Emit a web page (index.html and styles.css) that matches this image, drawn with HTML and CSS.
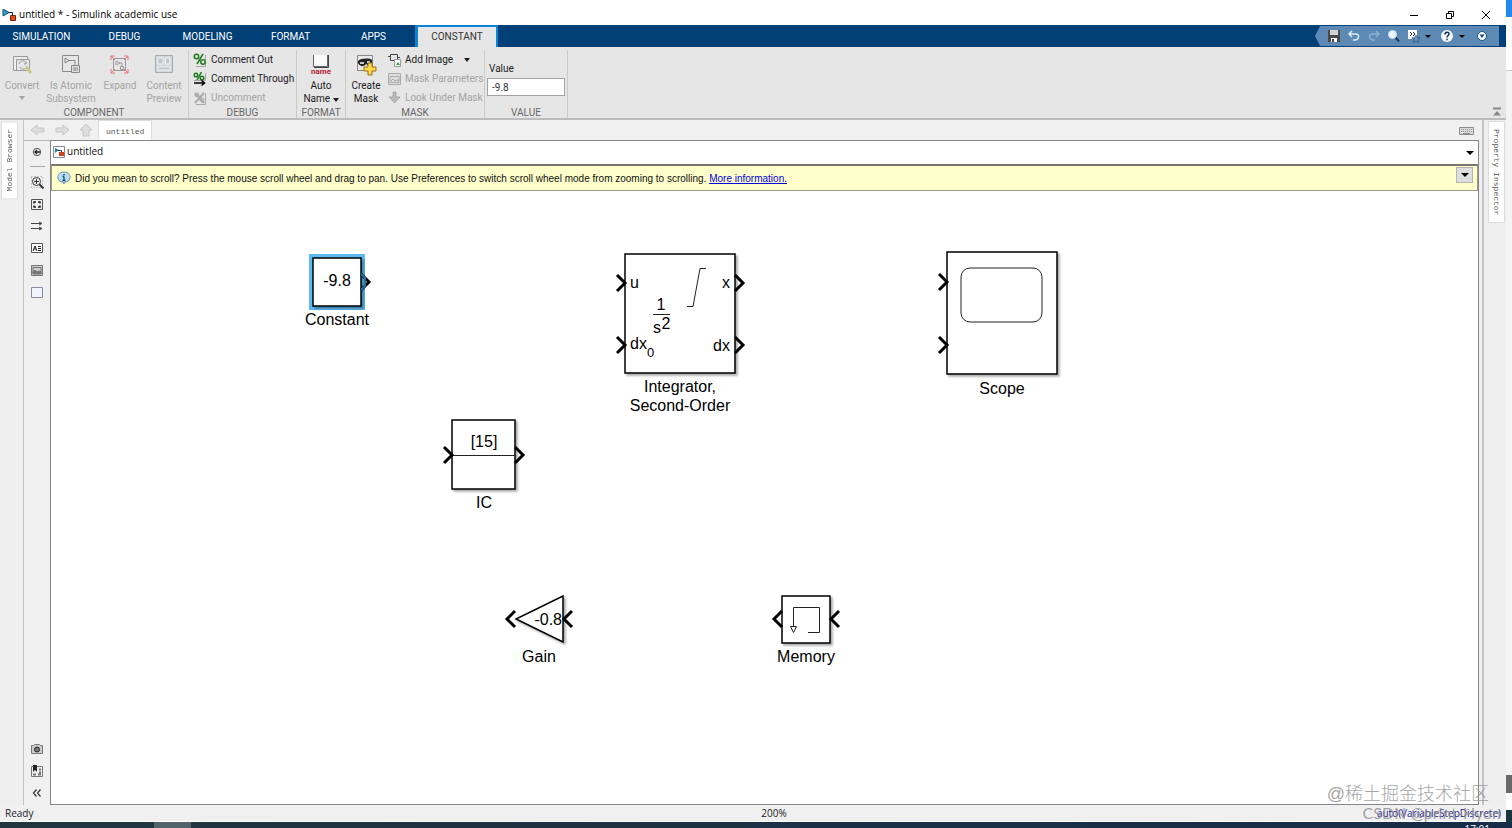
FILE: index.html
```html
<!DOCTYPE html>
<html lang="en">
<head>
<meta charset="utf-8">
<title>untitled * - Simulink academic use</title>
<link rel="stylesheet" href="styles.css">
</head>
<body>
<div class="desktop">
<div class="screen">
<div class="window">
  <header class="titlebar">
    <svg width="14" height="12" viewBox="0 0 14 12"><path d="M1 0v7l6-3.500z" fill="#29a3cf" stroke="#14506e"/><path d="M6 3.500h4.500v4" fill="none" stroke="#222"/><path d="M8.500 6.500h5v5h-5z" fill="#e0501c" stroke="#7c2408"/></svg>
    <h1 class="title">untitled * - Simulink academic use</h1>
    <div class="winbtns">
      <button aria-label="Minimize"><svg width="10" height="10"><path d="M1 5.500h8" stroke="#000"/></svg></button>
      <button aria-label="Restore"><svg width="10" height="10" fill="none" stroke="#000"><path d="M1.500 3.500h5v5h-5zM3.500 3V1.500h5v5H7"/></svg></button>
      <button aria-label="Close"><svg width="10" height="10"><path d="M1 1l8 8M9 1l-8 8" stroke="#000"/></svg></button>
    </div>
  </header>
  <nav class="tabs">
    <button>SIMULATION</button><button>DEBUG</button><button>MODELING</button><button>FORMAT</button><button>APPS</button><button class="active">CONSTANT</button>
    <div class="quick">
      <button aria-label="Save"><svg width="14" height="14"><path d="M1 1h12v12H1z" fill="#4a4a4a"/><path d="M3 1h8v5H3z" fill="#d4d4d4"/><path d="M4 9h6v4H4z" fill="#fff"/><path d="M5 10h2v3H5z" fill="#444"/></svg></button>
      <button aria-label="Undo"><svg width="14" height="14" fill="none" stroke="#d8ecfa" stroke-width="1.500"><path d="M5 2L2 5l3 3M2 5h7c4 0 3 6-1 6H6"/></svg></button>
      <button aria-label="Redo"><svg width="14" height="14" fill="none" stroke="#8db1cf" stroke-width="1.500"><path d="M9 2l3 3-3 3M12 5H5c-4 0-3 6 1 6h2"/></svg></button>
      <button aria-label="Find"><svg width="14" height="14"><path d="M8 8l4 4.500" stroke="#173c63" stroke-width="2"/><circle cx="5.500" cy="5.500" r="4" fill="#edf6fc" stroke="#c8dff0"/></svg></button>
      <button class="wide" aria-label="Favorites"><svg width="26" height="14"><path d="M1 1h9v9H1z" fill="#fff"/><path d="M3 3l2 2-2 2M6 3l2 2-2 2" fill="none" stroke="#222"/><path d="M9 6l1.200 2.500 2.800.3-2 2 .5 2.700L9 12l-2.500 1.500.5-2.700-2-2 2.800-.3z" fill="#6794bd" stroke="#264f7a" stroke-width=".7"/><path d="M18 6h6l-3 3z"/></svg></button>
      <button class="wide" aria-label="Help"><svg width="26" height="14"><circle cx="6" cy="7" r="6" fill="#f5f9fc"/><path d="M4 5.500c0-3 4-3 4-.5C8 6.500 6 6.500 6 8.500M6 9.800v1.500" fill="none" stroke="#1d2c52" stroke-width="1.500"/><path d="M18 6h6l-3 3z"/></svg></button>
      <button aria-label="Quick access options"><svg width="14" height="14"><circle cx="7" cy="7" r="4.500" fill="#fff" stroke="#12518b"/><path d="M4.500 5.500h5L7 9z" fill="#0a4a86"/></svg></button>
    </div>
  </nav>
  <div class="ribbon">
    <section class="group component">
      <div class="tools">
        <button class="big" disabled><svg width="22" height="22" fill="none" stroke="#999"><path d="M2.500 2.500h14v14h-14z" fill="#eee"/><path d="M5.500 5.500h13v11h-13z" fill="#e6e6e6"/><path d="M8 10c1-4 6-4 7-1M15 8v2h-2M16 12c-1 4-6 4-7 1"/><path d="M15 13l5 6" stroke="#cfc68a" stroke-width="3"/></svg><span>Convert</span><i class="caret"></i></button>
        <button class="big mid" disabled><svg width="22" height="22" fill="none" stroke="#888"><path d="M2.500 1.500h16v16h-16z"/><path d="M5 4l4 2.500L5 9zM9 6.500h6V11"/><path d="M11.500 11.500h8v7h-8z" fill="#ddd"/><path d="M13 14h5M13 16h5"/></svg><span>Is Atomic<br>Subsystem</span></button>
        <button class="big" disabled><svg width="22" height="22" fill="none" stroke="#999"><path d="M4.500 4.500h12v12h-12z"/><path d="M7 7l4 2-4 2zM11 9h2v3"/><path d="M11.500 12.500h3v3h-3z"/><path d="M2 6V2h4M2 2l4 4M15 2h4v4M19 2l-4 4M2 15v4h4M2 19l4-4M15 19h4v-4M19 19l-4-4" stroke="#e8707f"/></svg><span>Expand</span></button>
        <button class="big" disabled><svg width="22" height="22" fill="none" stroke="#aaa"><path d="M2.500 1.500h17v17h-17z" fill="#d3d9de"/><path d="M5 4h5v6H5zM12.500 4h4v6h-4zM5 13h12v3H5z" fill="#bcc7d0" stroke="#f0f0f0"/></svg><span>Content<br>Preview</span></button>
      </div>
      <h2>COMPONENT</h2>
    </section>
    <section class="group debug">
      <div class="tools list">
        <button><svg width="14" height="14" fill="none"><path d="M3 13.500h9.500V2" stroke="#aaa"/><path d="M10 1L4 11" stroke="#217a1d" stroke-width="1.500"/><circle cx="3.500" cy="3.500" r="2.200" stroke="#217a1d" stroke-width="1.500"/><circle cx="10" cy="9" r="2.200" stroke="#217a1d" stroke-width="1.500"/></svg>Comment Out</button>
        <button><svg width="14" height="14" fill="none"><path d="M1 8.500h11.500V1" stroke="#aaa"/><path d="M8.500 0L4 8" stroke="#217a1d" stroke-width="1.500"/><circle cx="3" cy="3" r="1.800" stroke="#217a1d" stroke-width="1.500"/><circle cx="9" cy="6" r="1.800" stroke="#217a1d" stroke-width="1.500"/><path d="M1 11h10M8.500 8.500l3 2.500-3 2.500" stroke="#000" stroke-width="1.500"/></svg>Comment Through</button>
        <button disabled><svg width="14" height="14" fill="none" stroke="#aaa"><path d="M3 13.500h9.500V2"/><circle cx="4" cy="4" r="2"/><circle cx="9" cy="9" r="2"/><path d="M2 2l9 10M11 2L2 12" stroke-width="2"/></svg>Uncomment</button>
      </div>
      <h2>DEBUG</h2>
    </section>
    <section class="group format">
      <div class="tools">
        <button class="big"><svg width="22" height="22"><path d="M3.500 1v11.500h14V1" fill="#fafafa" stroke="#666"/><path d="M4 13.500h14.500V1" fill="none" stroke="#444"/><text x="11" y="20" class="name-tag">name</text></svg><span>Auto<br>Name <i class="caret"></i></span></button>
      </div>
      <h2>FORMAT</h2>
    </section>
    <section class="group mask">
      <div class="tools">
        <button class="big"><svg width="22" height="22"><path d="M2.500 1.500h15v15h-15z" fill="#e8e8e8" stroke="#888"/><path d="M3 7c3-3 12-3 14-1v4c-2 3-4 2-6 0-2 3-6 3-8-1z" fill="#222"/><path d="M5 8h4v2H5zM12 7h3v2h-3z" fill="#bfc8c0"/><path d="M13 9h4v4h4v4h-4v4h-4v-4H9v-4h4z" fill="#ffd84a" stroke="#997214"/></svg><span>Create<br>Mask</span></button>
        <div class="list">
          <button><svg width="14" height="14" fill="none"><path d="M2.500 1.500h7v6h-7zM0 3.500h2M10 4.500h2" stroke="#444"/><path d="M6.500 6.500h6v7h-6z" fill="#f5faff" stroke="#999"/><path d="M8 12l2-3 2 3z" fill="#38a438"/></svg>Add Image <i class="caret"></i></button>
          <button disabled><svg width="14" height="14" fill="none" stroke="#aaa"><path d="M.5 1.500h12v11H.5z" fill="#ddd"/><path d="M2 4.500h9v6H2z"/><path d="M3 9l2-2 2 2 2-1 2 1"/></svg>Mask Parameters</button>
          <button disabled><svg width="14" height="14"><path d="M5 1h3v5h4l-5.500 6L1 6h4z" fill="#bbb" stroke="#999" stroke-width=".7"/></svg>Look Under Mask</button>
        </div>
      </div>
      <h2>MASK</h2>
    </section>
    <section class="group value">
      <div class="tools field"><label for="val">Value</label><input id="val" type="text" value="-9.8"></div>
      <h2>VALUE</h2>
    </section>
    <button class="collapse" aria-label="Collapse toolstrip"><svg width="10" height="10"><path d="M1 1.500h8" stroke="#888" stroke-width="2"/><path d="M5 4l4 4.500H1z" fill="#888"/></svg></button>
  </div>
  <main class="work">
    <aside class="dock left"><button>Model Browser</button></aside>
    <div class="editor">
      <div class="doctabs">
        <button aria-label="Back"><svg width="16" height="14"><path d="M1 7l6-5v3h7v4H7v3z" fill="#dedede" stroke="#c6c6c6"/></svg></button>
        <button aria-label="Forward"><svg width="16" height="14"><path d="M15 7L9 2v3H2v4h7v3z" fill="#dedede" stroke="#c6c6c6"/></svg></button>
        <button aria-label="Up"><svg width="16" height="14"><path d="M8 1l6 6h-3v6H5V7H2z" fill="#dedede" stroke="#c6c6c6"/></svg></button>
        <button class="doc">untitled</button>
        <button class="kbd" aria-label="Keyboard"><svg width="16" height="10" fill="none" stroke="#8c8c8c"><path d="M.5 1.500h14v7H.5z" fill="#ddd"/><path d="M2 3.500h11M2 5.500h11" stroke-dasharray="1 1"/><path d="M4 7.500h7"/></svg></button>
      </div>
      <div class="body">
        <div class="palette">
          <button aria-label="Hide browser"><svg width="14" height="14" fill="none" stroke="#555"><circle cx="7" cy="7" r="3.700"/><path d="M10 7H5M7 5L5 7l2 2" stroke="#222" stroke-width="1.300"/></svg></button>
          <hr>
          <button aria-label="Zoom"><svg width="14" height="14" fill="none" stroke="#333"><path d="M1.500 1.500h11v11h-11z" stroke="#999" stroke-dasharray="1 2"/><circle cx="6.500" cy="6.500" r="4" fill="#eee"/><path d="M4 6.500h5M6.500 4v5"/><path d="M9.500 9.500l4 4" stroke-width="2"/></svg></button>
          <button aria-label="Fit to view"><svg width="14" height="14" fill="none" stroke="#555"><path d="M1.500 2.500h11v10h-11z"/><path d="M4 6.500V5h2M8 5h2v1.500M4 8.500V10h2M8 10h2V8.500" stroke="#222" stroke-width="1.500"/></svg></button>
          <button aria-label="Sample time"><svg width="14" height="14" fill="none" stroke="#444"><path d="M1 4.500h11M9 3l3 1.500L9 6M1 9.500h11M9 8l3 1.500L9 11"/></svg></button>
          <button aria-label="Annotation"><svg width="14" height="14" fill="none" stroke="#555"><path d="M1.500 2.500h11v9h-11z" fill="#fff"/><path d="M3 10l2-5 2 5M4 8h2M8 5.500h3M8 7.500h3M8 9.500h3" stroke="#222"/></svg></button>
          <button aria-label="Image"><svg width="14" height="14" fill="none" stroke="#777"><path d="M1.500 2.500h11v10h-11z" fill="#ccc"/><path d="M3 4.500h8v6H3z"/><path d="M3 9l2-2 2 2 2-1 2 1v2H3z" fill="#777"/></svg></button>
          <button aria-label="Area"><svg width="14" height="14"><path d="M1.500 2.500h11v10h-11z" fill="#f2f2fc" stroke="#8b8ba0"/></svg></button>
          <span class="fill"></span>
          <button aria-label="Screenshot"><svg width="14" height="14" fill="none" stroke="#777"><path d="M1.500 3.500h2l1-1h5l1 1h2v8h-11z" fill="#ccc"/><circle cx="7" cy="7.500" r="2.500" fill="#777" stroke="#222"/></svg></button>
          <button aria-label="Model data"><svg width="14" height="14" fill="none" stroke="#777"><path d="M1.500 2.500h11v10h-11z"/><path d="M3 1h4v7L5 6 3 8z" fill="#222" stroke="none"/><path d="M9 5.500h2M9 8.500h2M3 10.500h3M8 10.500h3" stroke-width="2"/></svg></button>
          <button aria-label="Collapse palette"><svg width="14" height="14" fill="none" stroke="#333" stroke-width="1.200"><path d="M6.500 3.500L3.500 7l3 3.500M10.500 3.500L7.500 7l3 3.500"/></svg></button>
        </div>
        <div class="view">
          <div class="crumbs"><svg width="12" height="12"><path d="M.5.5h11v11H.5z" fill="#fff" stroke="#888"/><path d="M2 2l4 2-4 3z" fill="#1f7ba5"/><path d="M5 4.500h3.500V6" fill="none" stroke="#333"/><path d="M6 6h5v4H6z" fill="#ce431e"/></svg><a href="#">untitled</a><button aria-label="History"><i class="caret"></i></button></div>
          <div class="notice">
            <svg width="14" height="14"><path d="M7 1c8 0 8 10 1 10l-1 2-1-2C-1 11-1 1 7 1z" fill="#b8dcf1" stroke="#6d93ad"/><path d="M7 3v1.500M7 5.500v4M5.500 9.500h3M5.500 5.500H7" stroke="#164a83" stroke-width="1.300"/></svg>
            <p>Did you mean to scroll? Press the mouse scroll wheel and drag to pan. Use Preferences to switch scroll wheel mode from zooming to scrolling. <a href="#">More information.</a></p>
            <button aria-label="Notification options"><i class="caret"></i></button>
          </div>
          <div class="canvas">
            <figure class="node constant">
              <svg width="60" height="55"><path d="M2 1h56v56H2z" class="halo"/><path d="M6 5h48v48H6z" class="box"/><path d="M54 21l8 8-8 8" class="port"/><path d="M54 21l4 4v8l-4 4" fill="none" stroke="#1f6fa8" stroke-width="2"/><text x="30" y="33">-9.8</text></svg>
              <figcaption>Constant</figcaption>
            </figure>
            <figure class="node integrator">
              <svg width="132" height="124"><path d="M11 3h110v119H11z" class="box"/><path d="M3 24l8 8-8 8M3 86l8 8-8 8M121 24l8 8-8 8M121 86l8 8-8 8" class="port"/><text x="16" y="37" class="start">u</text><text x="16" y="98" class="start">dx</text><text x="33" y="106" class="start small">0</text><text x="116" y="37" class="end">x</text><text x="116" y="100" class="end">dx</text><text x="47" y="59">1</text><path d="M39 63.500h17M73 55.500h6l7-38h6" class="thin"/><text x="43" y="82">s</text><text x="52" y="78">2</text></svg>
              <figcaption>Integrator,<br>Second-Order</figcaption>
            </figure>
            <figure class="node scope">
              <svg width="132" height="128"><path d="M11 3h110v122H11z" class="box"/><path d="M3 25l8 8-8 8M3 88l8 8-8 8" class="port"/><rect x="25" y="19" width="81" height="54" rx="9" class="thin"/></svg>
              <figcaption>Scope</figcaption>
            </figure>
            <figure class="node ic">
              <svg width="86" height="73"><path d="M11 2h63v69H11z" class="box"/><path d="M11 37.500h63" class="thin"/><path d="M3 29l8 8-8 8M74 29l8 8-8 8" class="port"/><text x="43" y="29">[15]</text></svg>
              <figcaption>IC</figcaption>
            </figure>
            <figure class="node gain">
              <svg width="70" height="52"><path d="M59 3v46L12 26z" class="box"/><path d="M11 18l-8 8 8 8M68 18l-8 8 8 8" class="port"/><text x="58" y="32" class="end">-0.8</text></svg>
              <figcaption>Gain</figcaption>
            </figure>
            <figure class="node memory">
              <svg width="70" height="52"><path d="M11 3h48v47H11z" class="box"/><path d="M11 18l-8 8 8 8M68 18l-8 8 8 8" class="port"/><path d="M37 39.500h11.500v-25h-26v19M19.500 33.500h6l-3 6z" class="thin"/></svg>
              <figcaption>Memory</figcaption>
            </figure>
          </div>
        </div>
      </div>
    </div>
    <aside class="dock right"><button>Property Inspector</button></aside>
  </main>
  <footer class="status"><span>Ready</span><span>200%</span><a href="#">auto(VariableStepDiscrete)</a></footer>
  <div class="marks"><span class="cn">@稀土掘金技术社区</span><span class="csdn">CSDN @print-Hyon</span></div>
</div>
<div class="edge"><i class="blue"></i><i class="page"></i><i class="grey"></i><i class="thumb"></i><i class="page-end"></i><i class="dark"></i></div>
</div>
<div class="taskbar"><span class="task"></span><time>17:01</time></div>
</div>
</body>
</html>
```
FILE: styles.css
```css
* { box-sizing: border-box; }
body { margin: 0; font: 10px/13px "Open Sans", "Noto Sans", sans-serif; color: #1c1c1c; }
button { font: inherit; color: inherit; border: 0; background: none; padding: 0; margin: 0; }
svg { display: block; flex: none; }
h1, h2, p, figure { margin: 0; font: inherit; }
.desktop { height: 100vh; display: flex; flex-direction: column; overflow: hidden; }
.screen { flex: 1; min-height: 0; display: flex; }
.window { flex: 1; min-width: 0; display: flex; flex-direction: column; position: relative; background: #f0f0f0; }
.caret { display: inline-block; border: 3px solid transparent; border-top: 4px solid currentColor; border-bottom: 0; vertical-align: middle; }

.titlebar { height: 25px; background: #fff; display: flex; align-items: center; gap: 3px; padding: 4px 15px 0 2px; }
.title { flex: 1; color: #000; }
.winbtns { display: flex; gap: 26px; }

.tabs { height: 22px; background: #004076; display: flex; color: #fff; padding-right: 7px; font-family: Roboto, sans-serif; }
.tabs > button { width: 83px; }
.tabs .active { background: #e6e6e6; color: #333; border: 2px solid #0a84d4; border-bottom: 0; border-left-width: 3px; padding-bottom: 2px; }
.quick { margin: 1px 0 1px auto; padding: 0 10px 0 12px; background: #5c8ab4; display: flex; align-items: center; gap: 6px; clip-path: polygon(5px 0, 100% 0, 100% 100%, 5px 100%, 0 50%); }
.quick .wide { margin-right: 2px; }

.ribbon { height: 73px; background: #e6e6e6; border-bottom: 2px solid #bdbdbd; display: flex; padding-top: 3px; font-family: Roboto, sans-serif; }
.group { border-right: 1px solid #cacaca; display: flex; flex-direction: column; padding: 0 2px; }
.group h2 { text-align: center; color: #666; line-height: 11px; }
.tools { flex: 1; min-height: 0; display: flex; }
.component { width: 189px; padding: 0; }
.debug { width: 108px; }
.format { width: 49px; padding: 0; }
.mask { width: 139px; padding: 0; }
.value { width: 83px; }
.big { flex: none; display: flex; flex-direction: column; align-items: center; gap: 3px; width: 44px; padding-top: 4px; white-space: nowrap; }
.big .caret { margin-top: 1px; }
.big.mid { width: 54px; }
.format .big { width: 48px; }
.mask .big { width: 40px; }
.list { display: flex; flex-direction: column; }
.list button { flex: none; height: 19px; display: flex; align-items: center; gap: 4px; padding: 0 2px; white-space: nowrap; }
.mask .list button { gap: 3px; }
.list .caret { margin-left: 8px; }
button:disabled { color: #a4a4a4; }
.name-tag { font: bold 8px Roboto, sans-serif; fill: #b71c32; text-anchor: middle; }
.field { flex-direction: column; gap: 3px; padding-top: 12px; }
.field label { padding-left: 2px; }
.field input { width: 100%; height: 18px; border: 1px solid #a3a3a3; background: #fff; font: inherit; padding: 0 4px; color: #333; }
.collapse { margin: auto 4px 1px auto; }

.work { flex: 1; min-height: 0; display: flex; }
.dock { width: 24px; background: #efefef; }
.dock.left { border-right: 1px solid #c4c4c4; padding: 1px 0 0 1px; }
.dock.right { border-left: 2px solid #c4c4c4; padding: 1px 0 0 4px; }
.dock button { writing-mode: vertical-rl; background: #fff; border: 1px solid #ddd; width: 17px; font: 8px/13px "Liberation Mono", monospace; color: #555; padding: 7px 0; }
.dock.left button { transform: rotate(180deg); }
.editor { flex: 1; min-width: 0; display: flex; flex-direction: column; padding-right: 3px; }
.doctabs { height: 20px; display: flex; align-items: center; gap: 8px; padding-left: 6px; }
.doctabs .doc { align-self: stretch; background: #fff; border: 1px solid #ddd; border-bottom: 0; font: 8px/18px "Liberation Mono", monospace; color: #555; padding: 2px 7px 0; margin-left: -4px; }
.doctabs .kbd { margin: 2px 4px 0 auto; }
.body { flex: 1; min-height: 0; display: flex; }
.palette { width: 26px; display: flex; flex-direction: column; align-items: center; gap: 8px; padding: 4px 0 5px; border-top: 1px solid #bbb; }
.palette hr { width: 15px; margin: -1px 0 0; border: 0; border-top: 1px solid #aaa; }
.fill { flex: 1; }
.view { flex: 1; min-width: 0; display: flex; flex-direction: column; border: 1px solid #85858d; background: #fff; }
.crumbs { height: 23px; display: flex; align-items: center; gap: 2px; padding: 0 4px 2px 2px; }
.crumbs a { color: #111; text-decoration: none; }
.crumbs button { margin-left: auto; color: #000; line-height: 10px; }
.crumbs .caret, .notice .caret { border-left-width: 4px; border-right-width: 4px; }
.notice { height: 27px; border: 1px solid #9c9c82; border-top: 2px solid #77776f; background: #ffffcb; display: flex; align-items: center; gap: 4px; padding: 0 4px 0 5px; font-family: "Liberation Sans", Arial, sans-serif; white-space: nowrap; color: #111; }
.notice a { color: #0000e0; }
.notice button { margin: 1px 0 auto auto; width: 17px; height: 16px; background: #dedede; border: 1px solid #b5b5b5; line-height: 10px; color: #000; }

.canvas { flex: 1; position: relative; font: 16px/19px "Liberation Sans", Arial, sans-serif; color: #000; }
.node { position: absolute; display: flex; flex-direction: column; align-items: center; text-align: center; }
.node svg { overflow: visible; }
.node text { text-anchor: middle; }
.node .start { text-anchor: start; }
.node .end { text-anchor: end; }
.node .small { font-size: 13px; }
.box { fill: #fff; stroke: #000; stroke-width: 1.5; filter: drop-shadow(2px 2px 1px #0005); }
.halo { fill: #5db9f2; }
.port { fill: none; stroke: #000; stroke-width: 3; }
.thin { fill: none; stroke: #222; }
.constant { left: 254px; top: 62px; }
.integrator { left: 563px; top: 60px; }
.scope { left: 885px; top: 58px; }
.ic { left: 390px; top: 227px; }
.gain { left: 453px; top: 402px; }
.memory { left: 720px; top: 402px; }
.node figcaption { padding-top: 2px; white-space: nowrap; }

.status { height: 17px; display: grid; grid-template-columns: 18fr auto 17fr; align-items: center; padding: 0 5px; border-bottom: 1px solid #fff; color: #222; }
.status a { justify-self: end; color: #231c91; text-decoration: none; }
.marks { position: absolute; right: 5px; bottom: 1px; display: flex; flex-direction: column; align-items: flex-end; color: #8c8c8ccc; pointer-events: none; }
.cn { font: 300 18px/20px "Liberation Sans", "Noto Sans CJK SC", sans-serif; padding-right: 12px; }
.csdn { font: 16px/17px Lato, sans-serif; }
.edge { width: 6px; display: flex; flex-direction: column; background: #f4f4f4; }
.blue { height: 17px; background: #2188f0; }
.page { height: 54px; background: #fff; border-bottom: 1px solid #ccc; }
.grey { flex: 1; }
.thumb { height: 18px; background: #686868; }
.page-end { height: 17px; background: #fff; }
.dark { height: 12px; background: #173641; }
.taskbar { height: 6px; background: linear-gradient(90deg, #20363f, #152d48); display: flex; justify-content: space-between; overflow: hidden; padding: 0 22px 0 154px; }
.task { width: 37px; background: #52636b; }
.taskbar time { color: #fff; line-height: 14px; }
```
